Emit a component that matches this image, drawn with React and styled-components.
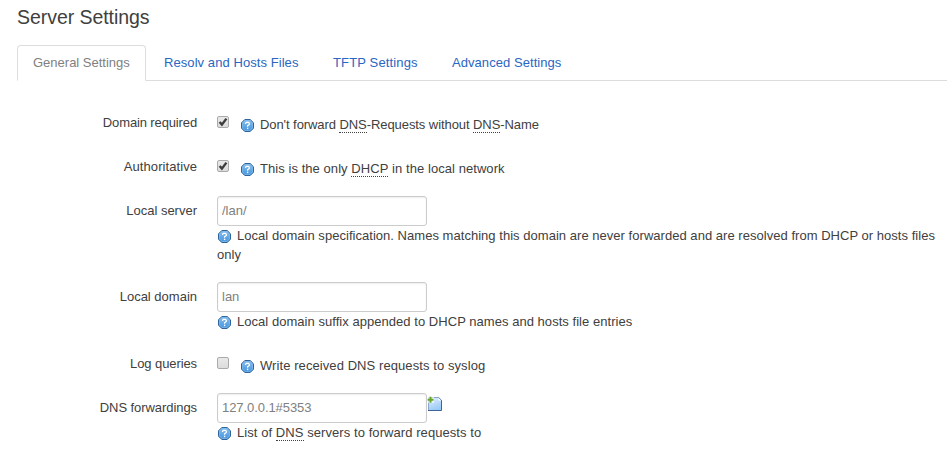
import React from "react";
import styled, { createGlobalStyle } from "styled-components";

const GlobalStyle = createGlobalStyle`
  * { box-sizing: border-box; }
  html, body { margin: 0; background: #fff; overflow: hidden; }
  body {
    font-family: "Liberation Sans", Arial, sans-serif;
    font-size: 13px;
    line-height: 19px;
    color: #404040;
  }
`;

const Page = styled.main`
  width: 947px;
  height: 451px;
  padding-top: 5px;
`;

const Title = styled.h1`
  margin: 0 0 16px 17px;
  height: 24px;
  font-size: 19.5px;
  line-height: 24px;
  font-weight: 400;
  letter-spacing: -0.05px;
`;

const Tabs = styled.nav`
  display: flex;
  height: 36px;
  margin-left: 17px;
  border-bottom: 1px solid #ddd;
`;

const Tab = styled.a`
  height: 36px;
  width: ${(p) => p.$width}px;
  margin-right: 2px;
  padding-left: 15px;
  line-height: 34px;
  white-space: nowrap;
  letter-spacing: ${(p) => p.$spacing || 0}px;
  border: 1px solid ${(p) => (p.$active ? "#ddd" : "transparent")};
  border-bottom-color: ${(p) => (p.$active ? "#fff" : "transparent")};
  border-radius: 4px 4px 0 0;
  color: ${(p) => (p.$active ? "#808080" : "#2a66c2")};
`;

const Form = styled.form`
  display: flex;
  flex-direction: column;
  gap: 18px;
  padding-top: 27px;
`;

const Field = styled.div`
  display: grid;
  grid-template-columns: 197px 730px;
  column-gap: 20px;
`;

const Label = styled.label`
  text-align: right;
  line-height: 19px;
  padding-top: 5px;
  letter-spacing: ${(p) => p.$spacing || 0}px;
`;

const CheckLine = styled.div`
  display: flex;
  height: 26px;
`;

const CheckBox = styled.span`
  width: 12px;
  height: 12px;
  margin: 8px 11px 0 0;
  border: 1px solid #aaa;
  border-radius: 2px;
  background: linear-gradient(#e9e9e9, #dcdcdc);

  svg { display: block; width: 10px; height: 10px; overflow: visible; }
`;

const CheckHelp = styled.div`
  padding-top: 7px;
  white-space: nowrap;
  letter-spacing: ${(p) => p.$spacing || 0}px;
`;

const InputLine = styled.div`
  display: flex;
  height: 30px;
`;

const Input = styled.input`
  width: 210px;
  height: 30px;
  padding: 0 4px 1px;
  border: 1px solid #ccc;
  border-radius: 3px;
  box-shadow: inset 0 1px 2px rgba(0, 0, 0, 0.07);
  font: inherit;
  color: #808080;
  letter-spacing: ${(p) => p.$spacing || 0}px;
  outline: none;
`;

const HelpText = styled.div`
  letter-spacing: ${(p) => p.$spacing || 0}px;
`;

const HelpGlyph = styled.svg`
  width: 16px;
  height: 16px;
  margin-right: 4px;
  vertical-align: top;
  margin-top: 3px;
`;

const AddGlyph = styled.svg`
  width: 16px;
  height: 16px;
  margin-top: 3px;
`;

const Abbr = styled.abbr`
  display: inline-block;
  height: 18px;
  line-height: 19px;
  text-decoration: none;
  border-bottom: 1px dotted #404040;
  vertical-align: top;
`;

const HelpIcon = () => (
  <HelpGlyph viewBox="0 0 16 16">
    <defs>
      <linearGradient id="help" x1="0" y1="0" x2="0" y2="1">
        <stop offset="0" stopColor="#8fc1ee" />
        <stop offset="1" stopColor="#3f93dd" />
      </linearGradient>
    </defs>
    <path d="M4.8 1.5h5.4L13.5 4.8v5.4l-3.3 3.3H4.8L1.5 10.2V4.8z" fill="url(#help)" stroke="#31649b" />
    <path d="M5.2 2.5h4.6L12.5 5.2v4.6l-2.7 2.7H5.2L2.5 9.8V5.2z" fill="none" stroke="#7db7ea" strokeWidth="0.8" />
    <path d="M5.6 6.1V5.2l.8-.8h2.1l.8.8v1.2L7.6 7.8v1" fill="none" stroke="#fff" strokeWidth="1.25" />
    <rect x="6.9" y="9.7" width="1.4" height="1.4" fill="#fff" />
  </HelpGlyph>
);

const AddIcon = () => (
  <AddGlyph viewBox="0 0 16 16">
    <defs>
      <linearGradient id="page" x1="0" y1="0" x2="0.4" y2="1">
        <stop offset="0" stopColor="#e4f0fd" />
        <stop offset="1" stopColor="#9bcbf8" />
      </linearGradient>
    </defs>
    <path d="M1.5 1.5h10.3l2.7 2.7v10.3h-13z" fill="url(#page)" />
    <path d="M1.5 14V1.5h10.3" fill="none" stroke="#8aa6cb" />
    <path d="M1 14.5h13.5V4.2" fill="none" stroke="#3c6496" />
    <path d="M11.5 2v2.5H14z" fill="#fff" />
    <path d="M11.7 1.5l2.8 2.8" stroke="#5f84b3" />
    <path d="M0 0h7v7H0z" fill="#fff" opacity=".6" />
    <path d="M3.5.7v6M.6 3.7h5.9" stroke="#68a52c" strokeWidth="2" />
  </AddGlyph>
);

const Check = ({ checked }) => (
  <CheckBox role="checkbox" aria-checked={checked}>
    {checked && (
      <svg viewBox="0 0 10 10">
        <path d="M1.6 5l2.3 2.6L8.4 1.6" fill="none" stroke="#3d3d3d" strokeWidth="2.4" />
      </svg>
    )}
  </CheckBox>
);

const CheckField = ({ label, checked, children, spacing, labelSpacing }) => (
  <Field>
    <Label $spacing={labelSpacing}>{label}</Label>
    <CheckLine>
      <Check checked={checked} />
      <CheckHelp $spacing={spacing}><HelpIcon />{children}</CheckHelp>
    </CheckLine>
  </Field>
);

const TextField = ({ label, value, add, children, spacing, labelSpacing, valueSpacing }) => (
  <Field>
    <Label $spacing={labelSpacing}>{label}</Label>
    <div>
      <InputLine>
        <Input defaultValue={value} $spacing={valueSpacing} />
        {add && <AddIcon />}
      </InputLine>
      <HelpText $spacing={spacing}><HelpIcon />{children}</HelpText>
    </div>
  </Field>
);

export default function App() {
  return (
    <>
      <GlobalStyle />
      <Page>
        <Title>Server Settings</Title>
        <Tabs>
          <Tab $active $width={129}>General Settings</Tab>
          <Tab $width={167} $spacing={0.07}>Resolv and Hosts Files</Tab>
          <Tab $width={117} $spacing={0.14}>TFTP Settings</Tab>
          <Tab $width={142} $spacing={0.06}>Advanced Settings</Tab>
        </Tabs>
        <Form>
          <CheckField label="Domain required" labelSpacing={-0.13} spacing={-0.075} checked>
            Don't forward <Abbr>DNS</Abbr>-Requests without <Abbr>DNS</Abbr>-Name
          </CheckField>
          <CheckField label="Authoritative" labelSpacing={0.07} spacing={0.06} checked>
            This is the only <Abbr>DHCP</Abbr> in the local network
          </CheckField>
          <TextField label="Local server" value="/lan/" spacing={0.033}>
            Local domain specification. Names matching this domain are never forwarded and are resolved from DHCP or hosts files only
          </TextField>
          <TextField label="Local domain" value="lan" spacing={0.04}>
            Local domain suffix appended to DHCP names and hosts file entries
          </TextField>
          <CheckField label="Log queries" labelSpacing={-0.09} spacing={0.08} checked={false}>
            Write received DNS requests to syslog
          </CheckField>
          <TextField label="DNS forwardings" labelSpacing={-0.07} value="127.0.0.1#5353" valueSpacing={-0.07} spacing={0.07} add>
            List of <Abbr>DNS</Abbr> servers to forward requests to
          </TextField>
        </Form>
      </Page>
    </>
  );
}
